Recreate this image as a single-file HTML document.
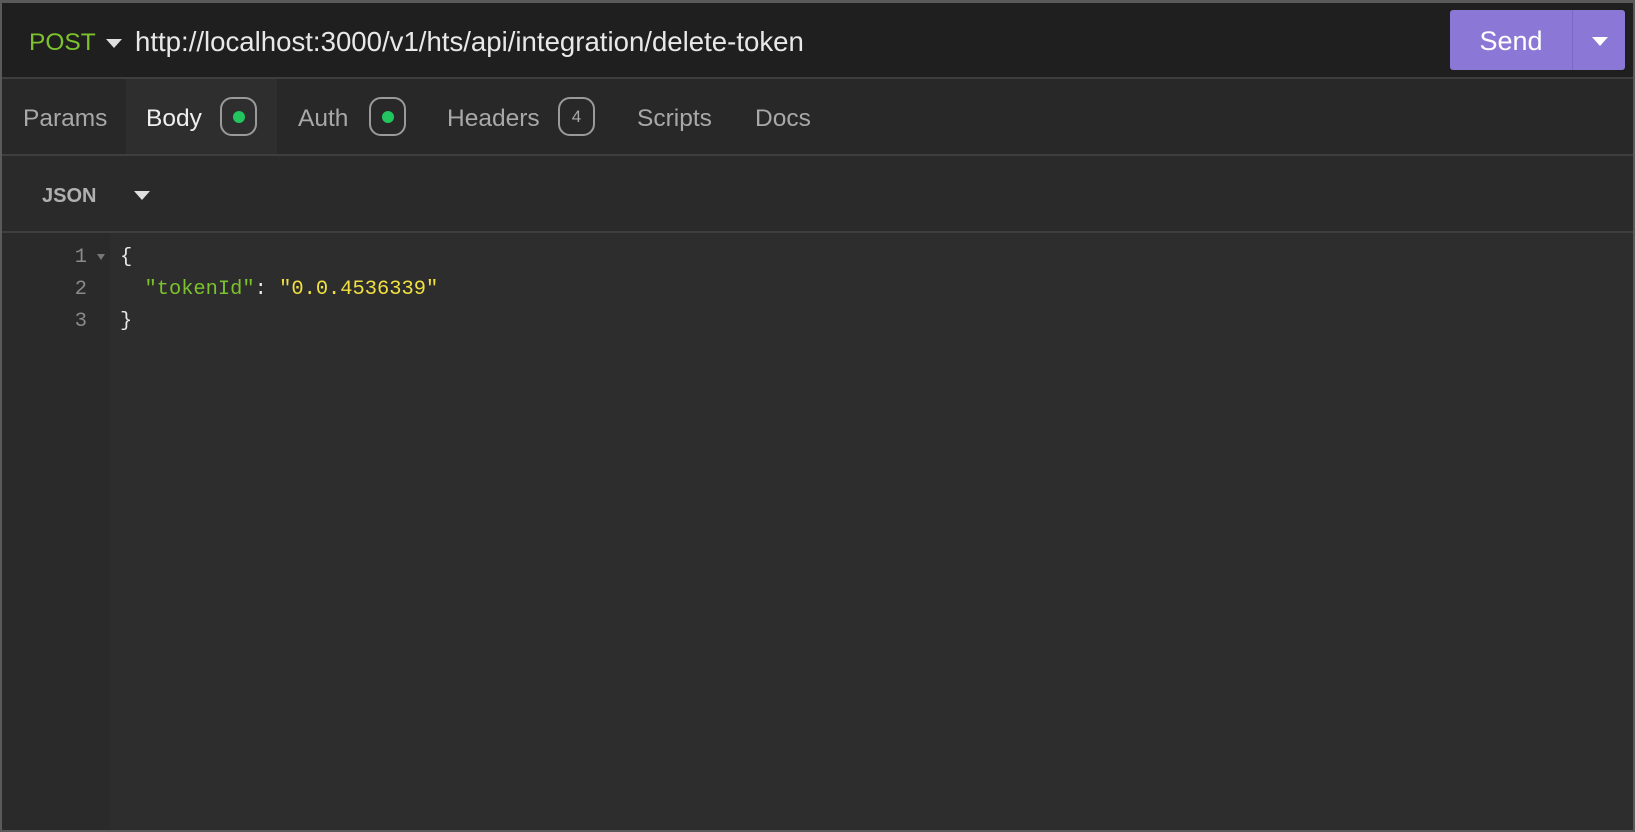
<!DOCTYPE html>
<html><head><style>
*{margin:0;padding:0;box-sizing:border-box}
body{width:1635px;height:832px;background:#2d2d2d;position:relative;overflow:hidden;font-family:"Segoe UI","Liberation Sans",sans-serif}
.a{position:absolute}
.frame{left:0;top:0;width:1635px;height:832px;border:2px solid #5a5a5a;border-top:3px solid #5a5a5a;pointer-events:none;z-index:5}
.top{left:0;top:0;width:1635px;height:79px;background:#1f1f1f;border-bottom:2px solid #3e3e3e}
.tabs{left:0;top:79px;width:1635px;height:77px;background:#282828;border-bottom:2px solid #3e3e3e}
.json{left:0;top:156px;width:1635px;height:77px;background:#2a2a2a;border-bottom:2px solid #3e3e3e}
.t{font-size:24.5px;color:#a8a8a8;top:21px;line-height:38px;white-space:nowrap}
.badge{width:37px;height:39px;border:2px solid #9a9a9a;border-radius:12px;top:18px;display:flex;align-items:center;justify-content:center;font-size:17px;color:#a8a8a8}
.dot{width:12px;height:12px;border-radius:50%;background:#22c55e}
.mono{font-family:"Liberation Mono",monospace;font-size:20.4px;white-space:pre;line-height:32px}
.tri{width:0;height:0;border-left:8px solid transparent;border-right:8px solid transparent;border-top:9px solid #e0e0e0}
</style></head><body>
<div class="a frame"></div>
<div class="a top">
 <div class="a" style="left:29px;top:24px;line-height:38px;font-size:24.5px;color:#7cc22d">POST</div>
 <div class="a tri" style="left:106px;top:39px"></div>
 <div class="a" style="left:135px;top:23px;line-height:38px;font-size:27.6px;color:#e8e8e8">http://localhost:3000/v1/hts/api/integration/delete-token</div>
 <div class="a" style="left:1450px;top:10px;width:175px;height:60px;background:#8b78d6;border-radius:3px"></div>
 <div class="a" style="left:1572px;top:10px;width:1px;height:60px;background:#7a68c2"></div>
 <div class="a" style="left:1450px;top:22px;line-height:38px;width:122px;text-align:center;font-size:27px;color:#fff">Send</div>
 <div class="a tri" style="left:1592px;top:37px;border-top-color:#fff"></div>
</div>
<div class="a tabs">
 <div class="a" style="left:126px;top:0;width:151px;height:75px;background:#2e2e2e"></div>
 <div class="a t" style="left:23px">Params</div>
 <div class="a t" style="left:146px;color:#f0f0f0">Body</div>
 <div class="a badge" style="left:220px"><div class="dot"></div></div>
 <div class="a t" style="left:298px">Auth</div>
 <div class="a badge" style="left:369px"><div class="dot"></div></div>
 <div class="a t" style="left:447px">Headers</div>
 <div class="a badge" style="left:558px">4</div>
 <div class="a t" style="left:637px">Scripts</div>
 <div class="a t" style="left:755px">Docs</div>
</div>
<div class="a json">
 <div class="a" style="left:42px;top:21px;line-height:38px;font-size:20px;font-weight:bold;color:#b0b0b0">JSON</div>
 <div class="a tri" style="left:134px;top:35px"></div>
</div>
<div class="a" style="left:2px;top:233px;width:108px;height:597px;background:#2a2a2a"></div>
<div class="a mono" style="left:56px;top:242px;color:#8a8a8a;text-align:right;width:31px">1
2
3</div>
<div class="a" style="left:97px;top:254px;border-left:4px solid transparent;border-right:4px solid transparent;border-top:6px solid #777"></div>
<div class="a mono" style="left:120px;top:242px;color:#e8e8e8">{
  <span style="color:#7cc22d">"tokenId"</span>: <span style="color:#f0e040">"0.0.4536339"</span>
}</div>
</body></html>
